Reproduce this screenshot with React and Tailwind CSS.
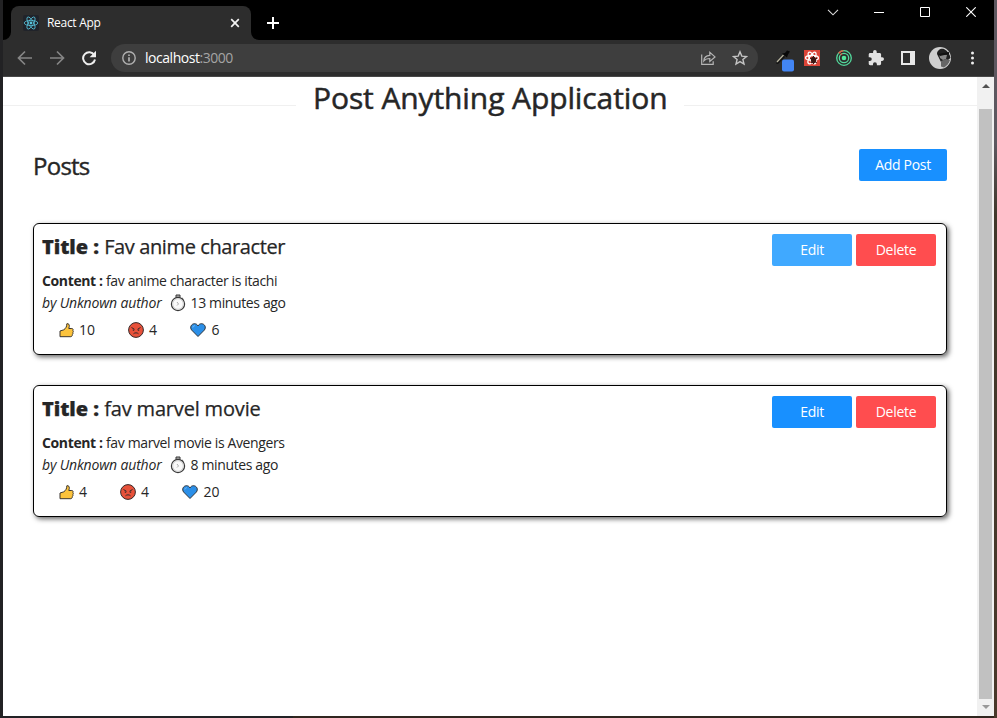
const posts = [
  {
    title: "Fav anime character",
    titleCls: "tracking-[-0.39px]",
    content: "fav anime character is itachi",
    time: "13 minutes ago",
    likes: 10,
    angry: 4,
    hearts: 6,
    editCls: "bg-[#40a9ff]",
  },
  {
    title: "fav marvel movie",
    titleCls: "tracking-[-0.17px]",
    content: "fav marvel movie is Avengers",
    time: "8 minutes ago",
    likes: 4,
    angry: 4,
    hearts: 20,
    editCls: "bg-[#1890ff]",
  },
];

function ReactLogo() {
  return (
    <svg width="16" height="16" viewBox="0 0 16 16" fill="none" stroke="#58c4dc" strokeWidth=".8">
      <rect width="16" height="16" rx="2" fill="#20232a" stroke="none" />
      <ellipse cx="8" cy="8" rx="6.8" ry="2.6" />
      <ellipse cx="8" cy="8" rx="6.8" ry="2.6" transform="rotate(60 8 8)" />
      <ellipse cx="8" cy="8" rx="6.8" ry="2.6" transform="rotate(120 8 8)" />
      <circle cx="8" cy="8" r="1.4" fill="#58c4dc" stroke="none" />
    </svg>
  );
}

function TabStrip() {
  return (
    <div className="flex h-10 shrink-0 bg-black">
      <div className="relative ml-2 mt-1.5 flex h-[34px] w-60 items-center rounded-t-lg bg-[#2d2d2d] pl-3 pr-[11px]">
        <svg className="absolute -left-2 bottom-0" width="8" height="8"><path d="M8 0v8H0a8 8 0 0 0 8-8" fill="#2d2d2d" /></svg>
        <svg className="absolute -right-2 bottom-0" width="8" height="8"><path d="M0 0v8h8a8 8 0 0 1-8-8" fill="#2d2d2d" /></svg>
        <ReactLogo />
        <span className="ml-2 flex-1 text-[12px] tracking-[-0.3px] text-white">React App</span>
        <svg width="10" height="10" viewBox="0 0 10 10" stroke="#f4f4f4" strokeWidth="1.7"><path d="M1.2 1.2l7.6 7.6M8.8 1.2L1.2 8.8" /></svg>
      </div>
      <svg className="ml-4 mt-[17px]" width="12" height="12" stroke="#fff" strokeWidth="2"><path d="M6 0v12M0 6h12" /></svg>
      <div className="ml-auto flex items-start">
        <svg className="mr-[35px] mt-[9px]" width="12" height="7" fill="none" stroke="#ddd" strokeWidth="1.1"><path d="M1 .8l5 5 5-5" /></svg>
        <svg className="mr-9 mt-[12px]" width="10" height="1"><path d="M0 0h10v1H0z" fill="#fff" /></svg>
        <svg className="mr-9 mt-[7px]" width="10" height="10" fill="none" stroke="#fff"><path d="M.5 .5h9v9h-9z" /></svg>
        <svg className="mr-[18px] mt-[7px]" width="10" height="10" stroke="#fff" strokeWidth="1.1"><path d="M.3 .3l9.4 9.4M9.7 .3L.3 9.7" /></svg>
      </div>
    </div>
  );
}

function Toolbar() {
  return (
    <div className="flex h-[37px] shrink-0 items-center border-b border-[#484848] bg-[#2d2d2d] pl-3.5">
      <svg width="16" height="16" fill="none" stroke="#858585" strokeWidth="1.7"><path d="M15 8H2M8 1.5L1.5 8 8 14.5" /></svg>
      <svg className="ml-4" width="16" height="16" fill="none" stroke="#858585" strokeWidth="1.7"><path d="M1 8h13M8 1.5L14.500 8 8 14.500" /></svg>
      <svg className="ml-4" width="16" height="16" fill="none"><path d="M13.300 5.200A6 6 0 1 0 14 9.500" stroke="#eee" strokeWidth="2" /><path d="M15 .8v6.400H8.600z" fill="#eee" /></svg>
      <div className="ml-3.5 flex h-7 w-[647px] items-center rounded-full bg-[#3e3e3e] pl-[11px]">
        <svg width="14" height="14" fill="none" stroke="#b0b0b0" strokeWidth="1.400"><circle cx="7" cy="7" r="6.200" /><path d="M7 6.200v4.300M7 3.400v1.600" strokeWidth="1.700" /></svg>
        <span className="-mt-0.5 ml-[9px] flex-1 text-[14px] tracking-[-0.460px] text-white">localhost<span className="text-[#a4a4a4]">:3000</span></span>
        <svg width="16" height="16" fill="none" stroke="#b5b5b5" strokeWidth="1.200"><path d="M1.700 4.500v9.800h11.500v-3M3.800 11c.2-3.800 2.500-5.400 6-5.600V2.300l5.200 4.600-5.200 4.500V8.500c-2.700 0-4.500.6-6 2.500z" /></svg>
        <svg className="ml-4 mr-[10px]" width="16" height="16" viewBox="0 0 16 16" fill="none" stroke="#c4c4c4" strokeWidth="1.400"><path d="M8 1.800l1.800 4.300 4.700.4-3.600 3 1.100 4.600L8 11.600l-4 2.500 1.100-4.600-3.600-3 4.700-.4z" /></svg>
      </div>
      <svg className="ml-4" width="22" height="28" viewBox="0 0 22 28">
        <path d="M2 19.500l7-8.500 2 2-7 7z" fill="#111" /><path d="M3 18l6.500-7" stroke="#b8b5a0" strokeWidth="1.200" /><path d="M8 9.500l5 4 1-3 2-3-3-1-2 2.500z" fill="#080808" />
        <rect x="8" y="15.500" width="12" height="12" rx="2" fill="#4285f4" />
      </svg>
      <svg className="ml-2" width="16" height="16" viewBox="0 0 16 16">
        <path d="M0 0h16v16H0z" fill="#dc4437" />
        <g fill="none" stroke="#fff" strokeWidth="1.300"><ellipse cx="8" cy="8" rx="6.500" ry="2.500" /><ellipse cx="8" cy="8" rx="6.500" ry="2.500" transform="rotate(60 8 8)" /><ellipse cx="8" cy="8" rx="6.500" ry="2.500" transform="rotate(120 8 8)" /></g>
        <ellipse cx="9.500" cy="10" rx="2.600" ry="3.200" fill="#3b1712" /><path d="M6 8l7 5M13 8l-6 5M9.500 6v8" stroke="#3b1712" />
      </svg>
      <svg className="ml-4" width="16" height="16" fill="none" stroke="#52d99c" strokeWidth="1.300"><circle cx="8" cy="8" r="7.300" /><circle cx="8" cy="8" r="4.700" /><circle cx="8" cy="8" r="2.300" fill="#52e99c" stroke="none" /><path d="M2.600 3.200A7.300 7.300 0 0 1 7.500 .7M4.600 4.600l1.400-1" stroke="#e35b43" /></svg>
      <svg className="ml-4" width="16" height="16" viewBox="1 1 22 22"><path d="M20.500 11H19V7c0-1.100-.9-2-2-2h-4V3.500a2.500 2.500 0 0 0-5 0V5H4c-1.100 0-2 .9-2 2v3.800h1.500a2.700 2.700 0 0 1 0 5.400H2V20c0 1.100.9 2 2 2h3.800v-1.500a2.700 2.700 0 0 1 5.400 0V22H17c1.100 0 2-.9 2-2v-4h1.500a2.500 2.500 0 0 0 0-5z" fill="#e2e2e2" /></svg>
      <svg className="ml-[17px]" width="14" height="14"><path fillRule="evenodd" d="M0 0h14v14H0zM2 2v10h7V2z" fill="#e8e8e8" /></svg>
      <svg className="ml-3.5" width="22" height="22" viewBox="0 0 22 22">
        <circle cx="11" cy="11" r="11" fill="#cfcfcf" />
        <path d="M8 7c0-4 4-6 7-5 4 2 6 6 6.500 9-2 1-3 3-5 3l-4 2z" fill="#202020" />
        <path d="M10 7l8 1-1 4-3 1-3-2z" fill="#888" /><path d="M9 7l11-2v2l-9 2z" fill="#111" />
        <path d="M12 14l5-2 4 1c-1 3-3 6-6 7.500l-3-1z" fill="#666" />
      </svg>
      <svg className="ml-[19px]" width="4" height="14" fill="#eee"><circle cx="2.500" cy="2" r="1.500" /><circle cx="2.500" cy="7" r="1.500" /><circle cx="2.500" cy="12" r="1.500" /></svg>
    </div>
  );
}

function Stopwatch() {
  return (
    <svg width="16" height="18" viewBox="0 0 16 18" fill="none" stroke="#393939">
      <path d="M6 3V1h4v2M12.200 4l1.300 1.300" fill="#aaa" strokeWidth="1" />
      <circle cx="8" cy="10" r="6.600" fill="#fafafa" strokeWidth="1.200" />
      <circle cx="8" cy="10" r="5.300" stroke="#c8c8c8" strokeWidth=".8" />
      <path d="M7 8l1.500 2L7 11.500" stroke="#999" strokeWidth=".8" />
    </svg>
  );
}

function Thumb() {
  return (
    <svg width="16" height="16" viewBox="0 0 16 16">
      <path d="M1 9l3.800-1.200c2-1.500 3-3 3-6 1.700-.8 2.700 1 2.500 2.500L9.800 6.500h3c1.300 0 1.500 1.200 1.100 2 .6.7.5 1.700-.1 2.100.4.900 0 1.600-.5 1.900.2 1.200-.5 2-1.500 2.200H1z" fill="#fcc33c" stroke="#3a3530" strokeLinejoin="round" />
    </svg>
  );
}

function Angry() {
  return (
    <svg width="16" height="16" viewBox="0 0 16 16" fill="none" stroke="#352a2a">
      <circle cx="8" cy="8" r="7.400" fill="#e8513a" />
      <path d="M3.500 5.500l3 1.800M12.500 5.500l-3 1.800M5.500 11.800c1.300-1.300 3.700-1.300 5 0" />
      <path d="M4.800 7.500h1.400v1.200H4.800zM9.800 7.500h1.400v1.200H9.800z" fill="#352a2a" stroke="none" />
    </svg>
  );
}

function Heart() {
  return (
    <svg width="16" height="16" viewBox="0 0 16 16">
      <path d="M8 14.500L1.600 8C-.3 5.500 1 2 4.300 1.700 6 1.600 7.300 2.500 8 4c.7-1.500 2-2.400 3.700-2.300C15 2 16.300 5.500 14.400 8z" fill="#2b8fe8" stroke="#30363d" strokeLinejoin="round" />
      <path d="M2.800 5.500c.2-1.300 1-1.700 2-1.800" fill="none" stroke="#7cc0f5" />
    </svg>
  );
}

function Reaction({ icon, count, className = "" }) {
  return (
    <span className={`flex items-center ${className}`}>
      {icon}
      <span className="-mt-0.5">{count}</span>
    </span>
  );
}

function Button({ className, children }) {
  return <button className={`h-8 rounded-[2px] pb-0.5 text-[14px] tracking-[-0.3px] text-white ${className}`}>{children}</button>;
}

function PostCard({ post }) {
  return (
    <article className="flex h-[132px] justify-between rounded-[6px] border border-black pl-2 pr-2.5 shadow-[2px_2px_5px_#666]">
      <div className="pt-[9px]">
        <h3 className="h-7 whitespace-nowrap text-[20px] leading-7 [-webkit-text-stroke:0.25px]">
          <b className="font-extrabold tracking-[-0.05px]">Title :</b> <span className={post.titleCls}>{post.title}</span>
        </h3>
        <p className="mt-[9px] h-[22px] whitespace-nowrap text-[14px] leading-[22px] tracking-[-0.37px]"><b>Content :</b> {post.content}</p>
        <p className="flex h-[22px] items-center whitespace-nowrap text-[14px] leading-[22px]">
          <i className="mr-2 tracking-[-0.16px]">by Unknown author</i><Stopwatch /><span className="ml-[5px] tracking-[-0.38px]">{post.time}</span>
        </p>
        <div className="ml-[17px] mt-[5px] flex h-[22px] items-center gap-[33px] text-[14px]">
          <Reaction className="gap-1" icon={<Thumb />} count={post.likes} />
          <Reaction className="gap-[5px]" icon={<Angry />} count={post.angry} />
          <Reaction className="gap-[5.5px]" icon={<Heart />} count={post.hearts} />
        </div>
      </div>
      <div className="flex gap-1 pt-2.5">
        <Button className={`w-20 ${post.editCls}`}>Edit</Button>
        <Button className="w-20 bg-[#ff4d4f]">Delete</Button>
      </div>
    </article>
  );
}

function Page() {
  return (
    <main className="min-w-0 flex-1 bg-white text-[#262626]">
      <div className="flex h-11 items-center">
        <div className="mt-3 h-px flex-1 bg-[#f0f0f0]" />
        <h1 className="mx-[17px] -mt-0.5 w-[354px] whitespace-nowrap text-[30px] leading-[44px] tracking-[-0.1px] [-webkit-text-stroke:0.5px]">Post Anything Application</h1>
        <div className="mt-3 h-px flex-1 bg-[#f0f0f0]" />
      </div>
      <div className="px-[30px] pt-7">
        <div className="flex h-8 items-start justify-between">
          <h2 className="text-[24px] leading-[34px] tracking-[-0.75px] [-webkit-text-stroke:0.4px]">Posts</h2>
          <Button className="w-[88px] bg-[#1890ff]">Add Post</Button>
        </div>
        <div className="mt-[42px] flex flex-col gap-[30px]">
          {posts.map((p) => <PostCard key={p.title} post={p} />)}
        </div>
      </div>
    </main>
  );
}

function Scrollbar() {
  return (
    <div className="flex w-[17px] shrink-0 flex-col items-center bg-[#f1f1f1]">
      <svg className="mt-[7px]" width="8" height="4"><path d="M0 4l4-4 4 4z" fill="#505050" /></svg>
      <div className="mt-[21px] h-[590px] w-[13px] bg-[#c1c1c1]" />
      <svg className="mt-[6px]" width="8" height="4"><path d="M0 0l4 4 4-4z" fill="#999" /></svg>
    </div>
  );
}

export default function App() {
  return (
    <div className="flex h-[718px] w-[997px] overflow-hidden bg-[#222225] font-['Open_Sans','Noto_Sans',sans-serif]">
      <div className="w-[3px] shrink-0 bg-[#222224]" />
      <div className="flex w-[991px] shrink-0 flex-col">
        <TabStrip />
        <Toolbar />
        <div className="flex h-[639px] shrink-0">
          <Page />
          <Scrollbar />
        </div>
        <div className="flex h-[2px]"><div className="w-[290px] bg-[#222225]" /><div className="flex-1 bg-[#30261f]" /></div>
      </div>
      <div className="w-[3px] shrink-0 bg-linear-to-b from-[#5d5860] from-20% via-[#40372a] via-30% to-[#49382a]" />
    </div>
  );
}
